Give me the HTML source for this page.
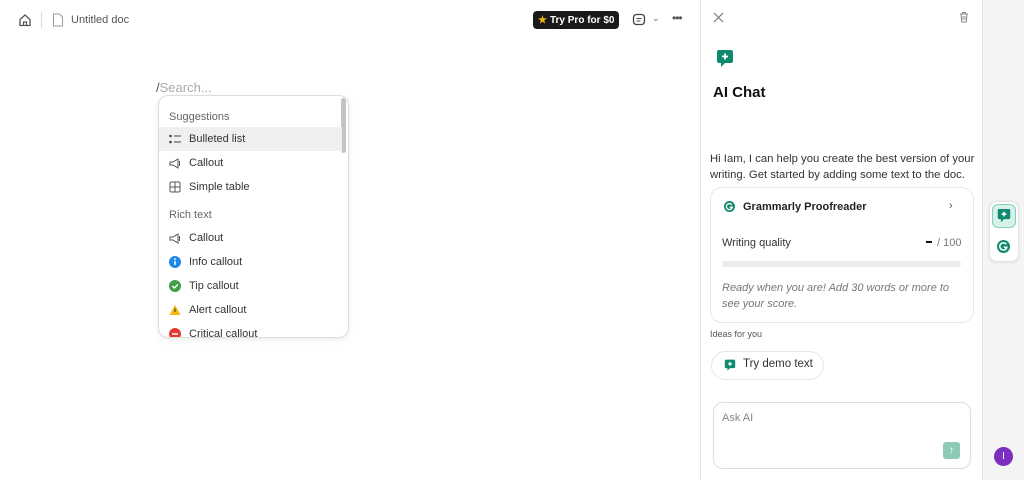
<!DOCTYPE html>
<html><head><style>
*{box-sizing:border-box;margin:0;padding:0}
body{width:1024px;height:480px;overflow:hidden;background:#fff;font-family:"Liberation Sans",sans-serif;color:#222;position:relative}
.a{position:absolute}
.mi{position:absolute;left:0;width:183px;height:24px;font-size:11px;color:#333;display:flex;align-items:center;padding-left:10px}
.mi svg{margin-right:8px}
.hd{position:absolute;left:10px;font-size:11px;color:#666}
</style></head><body>
<!-- top bar -->
<svg class="a" style="left:18px;top:13px" width="14" height="14" viewBox="0 0 14 14"><path d="M2 6.5L7 2l5 4.5V12.5H2z" fill="none" stroke="#555" stroke-width="1.3"/><path d="M5.5 12.5V9h3v3.5" fill="none" stroke="#555" stroke-width="1.2"/></svg>
<div class="a" style="left:41px;top:12px;width:1px;height:16px;background:#ddd"></div>
<svg class="a" style="left:52px;top:13px" width="12" height="14" viewBox="0 0 12 14"><path d="M1.5 1h6l3 3v9h-9z" fill="none" stroke="#999" stroke-width="1"/></svg>
<div class="a" style="left:71px;top:14px;font-size:11px;color:#555">Untitled doc</div>
<div class="a" style="left:533px;top:11px;width:86px;height:18px;background:#1a1a1a;border-radius:4px;color:#fff;font-size:10px;font-weight:bold;display:flex;align-items:center;padding-left:5px"><span style="color:#f5b50a;margin-right:3px">★</span>Try Pro for $0</div>
<svg class="a" style="left:632px;top:13px" width="14" height="14" viewBox="0 0 14 14"><rect x="1.5" y="1.5" width="11" height="10" rx="3" fill="none" stroke="#444" stroke-width="1.3"/><path d="M4.5 5.5h5M4.5 8h4" stroke="#444"/></svg>
<div class="a" style="left:652px;top:13px;font-size:9px;color:#666">⌄</div>
<div class="a" style="left:672px;top:11px;font-size:12px;color:#555;letter-spacing:-1px">•••</div>
<!-- search -->
<div class="a" style="left:156px;top:80px;font-size:13px;color:#aaa"><span style="color:#555">/</span>Search...</div>
<div class="a" style="left:158px;top:95px;width:191px;height:243px;border:1px solid #ddd;border-radius:10px;box-shadow:0 2px 6px rgba(0,0,0,.08);overflow:hidden;background:#fff">
<div class="a" style="right:2px;top:2px;width:5px;height:55px;background:#c4c4c4;border-radius:3px"></div>
<div class="hd" style="top:15px">Suggestions</div>
<div class="mi" style="top:31px;background:#efefef"><svg width="12" height="10"><circle cx="1.5" cy="2" r="1.3" fill="#444"/><circle cx="1.5" cy="8" r="1.3" fill="#444"/><path d="M5 2h7M5 8h7" stroke="#444"/></svg>Bulleted list</div>
<div class="mi" style="top:55px"><svg width="12" height="11"><path d="M1 4h3l5-3v9l-5-3H1z M10.5 3v5" fill="none" stroke="#555"/></svg>Callout</div>
<div class="mi" style="top:79px"><svg width="12" height="12"><rect x="1" y="1" width="10" height="10" rx="1.5" fill="none" stroke="#555"/><path d="M6 1v10M1 6h10" stroke="#555"/></svg>Simple table</div>
<div class="hd" style="top:113px">Rich text</div>
<div class="mi" style="top:130px"><svg width="12" height="11"><path d="M1 4h3l5-3v9l-5-3H1z M10.5 3v5" fill="none" stroke="#555"/></svg>Callout</div>
<div class="mi" style="top:154px"><svg width="12" height="12"><circle cx="6" cy="6" r="6" fill="#1e88e5"/><path d="M6 5v4" stroke="#fff" stroke-width="1.5"/><circle cx="6" cy="3.2" r=".9" fill="#fff"/></svg>Info callout</div>
<div class="mi" style="top:178px"><svg width="12" height="12"><circle cx="6" cy="6" r="6" fill="#43a047"/><path d="M3.3 6l2 2 3.5-3.5" fill="none" stroke="#fff" stroke-width="1.4"/></svg>Tip callout</div>
<div class="mi" style="top:202px"><svg width="12" height="12"><path d="M6 1l5.5 10H.5z" fill="#f5b50a"/><path d="M6 4.5v3.5" stroke="#333"/></svg>Alert callout</div>
<div class="mi" style="top:226px"><svg width="12" height="12"><circle cx="6" cy="6" r="6" fill="#e53935"/><path d="M3 6h6" stroke="#fff" stroke-width="1.6"/></svg>Critical callout</div>
</div>
<!-- panel -->
<div class="a" style="left:700px;top:0;width:1px;height:480px;background:#e4e4e4"></div>
<div class="a" style="left:982px;top:0;width:42px;height:480px;background:#f4f4f4;border-left:1px solid #e6e6e6"></div>
<svg class="a" style="left:713px;top:12px" width="11" height="11"><path d="M1 1l9 9M10 1l-9 9" stroke="#777" stroke-width="1.2"/></svg>
<svg class="a" style="left:959px;top:11px" width="10" height="12"><path d="M1 3h8M3.5 3V1.5h3V3M2 3l.7 8h4.6L8 3M4 5v4M6 5v4" fill="none" stroke="#888"/></svg>
<svg class="a" style="left:716px;top:49px" width="18" height="20" viewBox="0 0 18 20"><path d="M3 1h12a2 2 0 0 1 2 2v9a2 2 0 0 1-2 2H9l-4 4v-4H3a2 2 0 0 1-2-2V3a2 2 0 0 1 2-2z" fill="#0f8a6e"/><path d="M9 4.5v6M6 7.5h6" stroke="#fff" stroke-width="1.8"/></svg>
<div class="a" style="left:713px;top:84px;font-size:15px;font-weight:bold;color:#111">AI Chat</div>
<div class="a" style="left:710px;top:151px;width:270px;font-size:11.3px;line-height:16px;color:#333">Hi Iam, I can help you create the best version of your writing. Get started by adding some text to the doc.</div>
<div class="a" style="left:710px;top:187px;width:264px;height:136px;border:1px solid #e6e6e6;border-radius:12px"></div>
<svg class="a" style="left:724px;top:201px" width="11" height="11"><circle cx="5.5" cy="5.5" r="5.5" fill="#0f8a6e"/><path d="M7.8 3.8A3 3 0 1 0 8.3 6.2H5.8" fill="none" stroke="#fff" stroke-width="1.3"/></svg>
<div class="a" style="left:743px;top:201px;font-size:11px;font-weight:bold;color:#222">Grammarly Proofreader</div>
<div class="a" style="left:949px;top:200px;font-size:11px;color:#555">›</div>
<div class="a" style="left:722px;top:237px;font-size:11px;color:#333">Writing quality</div>
<div class="a" style="left:926px;top:241px;width:6px;height:2px;background:#111"></div>
<div class="a" style="left:937px;top:237px;font-size:11px;color:#777">/ 100</div>
<div class="a" style="left:722px;top:261px;width:239px;height:6px;background:#ececec;border-radius:3px"></div>
<div class="a" style="left:722px;top:280px;width:245px;font-size:11px;line-height:16px;color:#777;font-style:italic">Ready when you are! Add 30 words or more to see your score.</div>
<div class="a" style="left:710px;top:329px;font-size:9px;color:#555">Ideas for you</div>
<div class="a" style="left:711px;top:351px;width:113px;height:29px;border:1px solid #e6e6e6;border-radius:15px"></div>
<svg class="a" style="left:724px;top:359px" width="12" height="13" viewBox="0 0 18 20"><path d="M3 1h12a2 2 0 0 1 2 2v9a2 2 0 0 1-2 2H9l-4 4v-4H3a2 2 0 0 1-2-2V3a2 2 0 0 1 2-2z" fill="#0f8a6e"/><path d="M9 4.5v6M6 7.5h6" stroke="#fff" stroke-width="2"/></svg>
<div class="a" style="left:743px;top:358px;font-size:11.5px;color:#333">Try demo text</div>
<div class="a" style="left:713px;top:402px;width:258px;height:67px;border:1px solid #ddd;border-radius:10px"></div>
<div class="a" style="left:722px;top:412px;font-size:11px;color:#888">Ask AI</div>
<div class="a" style="left:943px;top:442px;width:17px;height:17px;background:#8fcab9;border-radius:3px;color:#fff;font-size:10px;text-align:center;line-height:17px">↑</div>
<div class="a" style="left:989px;top:201px;width:30px;height:61px;background:#fff;border:1px solid #e2e2e2;border-radius:8px;box-shadow:0 1px 3px rgba(0,0,0,.08)"></div>
<div class="a" style="left:992px;top:204px;width:24px;height:24px;background:#d6f2ea;border:1px solid #7fd0b8;border-radius:6px"></div>
<svg class="a" style="left:997px;top:208px" width="14" height="16" viewBox="0 0 18 20"><path d="M3 1h12a2 2 0 0 1 2 2v9a2 2 0 0 1-2 2H9l-4 4v-4H3a2 2 0 0 1-2-2V3a2 2 0 0 1 2-2z" fill="#0f8a6e"/><path d="M9 4.5v6M6 7.5h6" stroke="#fff" stroke-width="2"/></svg>
<svg class="a" style="left:997px;top:240px" width="13" height="13"><circle cx="6.5" cy="6.5" r="6.5" fill="#0f8a6e"/><path d="M9.3 4.3A3.6 3.6 0 1 0 9.9 7.2H6.8" fill="none" stroke="#fff" stroke-width="1.5"/></svg>
<div class="a" style="left:994px;top:447px;width:19px;height:19px;border-radius:50%;background:#7b2fbe;color:#fff;font-size:10px;text-align:center;line-height:19px">I</div>
</body></html>
